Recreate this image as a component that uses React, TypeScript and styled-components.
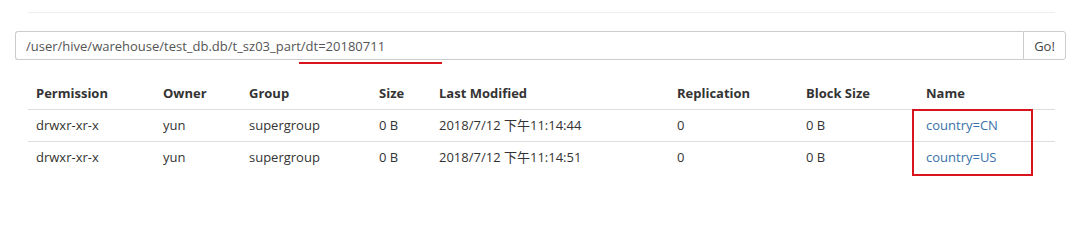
import React from 'react';
import styled, { createGlobalStyle } from 'styled-components';

const GlobalStyle = createGlobalStyle`
  html, body {
    margin: 0;
    padding: 0;
    background: #fff;
  }
  body {
    font-family: "Open Sans", "Noto Sans CJK SC", sans-serif;
    font-size: 13px;
    color: #333;
  }
`;

const Page = styled.div`
  width: 1085px;
  min-height: 205px;
  box-sizing: border-box;
  padding: 12px 19px 0 15px;
`;

const Inset = styled.div`
  margin: 0 11px 0 13px;
`;

const Divider = styled.hr`
  margin: 0;
  border: 0;
  border-top: 1px solid #eee;
`;

const SearchGroup = styled.div`
  position: relative;
  display: flex;
  margin: 18px 0 18px;
  height: 29px;
`;

const PathInput = styled.input`
  flex: 1;
  box-sizing: border-box;
  height: 100%;
  padding: 0 10px;
  border: 1px solid #ccc;
  border-right: 0;
  border-radius: 3px 0 0 3px;
  font-family: inherit;
  font-size: 13px;
  color: #555;
  outline: none;
`;

const GoButton = styled.button`
  box-sizing: border-box;
  width: 43px;
  height: 100%;
  border: 1px solid #ccc;
  border-radius: 0 3px 3px 0;
  background: #fff;
  font-family: inherit;
  font-size: 13px;
  color: #444;
  padding: 0;
`;

const Underline = styled.span`
  position: absolute;
  left: 284px;
  top: 31px;
  width: 143px;
  height: 2px;
  background: #d9141c;
`;

const TableWrap = styled.div`
  position: relative;
`;

const Table = styled.table`
  width: 100%;
  border-collapse: collapse;
  table-layout: fixed;
`;

const HeadCell = styled.th<{ $w: number }>`
  box-sizing: border-box;
  width: ${(p) => p.$w}px;
  text-align: left;
  font-weight: 700;
  padding: 6px 8px;
  line-height: 19px;
  border-bottom: 1px solid #ddd;
`;

const Row = styled.tr<{ $last?: boolean }>`
  border-bottom: ${(p) => (p.$last ? '0' : '1px solid #ddd')};
`;

const Cell = styled.td`
  padding: 6px 8px;
  line-height: 19px;
  white-space: nowrap;
`;

const NameLink = styled.a`
  color: #3a72aa;
  text-decoration: none;
`;

const Highlight = styled.div`
  position: absolute;
  left: 884px;
  top: 31px;
  width: 121px;
  height: 67px;
  box-sizing: border-box;
  border: 2px solid #d9141c;
  pointer-events: none;
`;

const columns: [string, number][] = [
  ['Permission', 127],
  ['Owner', 86],
  ['Group', 130],
  ['Size', 60],
  ['Last Modified', 238],
  ['Replication', 129],
  ['Block Size', 120],
  ['Name', 137],
];

const rows = [
  { modified: '2018/7/12 下午11:14:44', name: 'country=CN' },
  { modified: '2018/7/12 下午11:14:51', name: 'country=US' },
];

const App = () => {
  return (
    <Page>
      <GlobalStyle />
      <Inset>
        <Divider />
      </Inset>
      <SearchGroup>
        <PathInput readOnly value="/user/hive/warehouse/test_db.db/t_sz03_part/dt=20180711" />
        <GoButton>Go!</GoButton>
        <Underline />
      </SearchGroup>
      <Inset>
        <TableWrap>
          <Table>
            <thead>
              <tr>
                {columns.map(([label, w]) => (
                  <HeadCell key={label} $w={w}>
                    {label}
                  </HeadCell>
                ))}
              </tr>
            </thead>
            <tbody>
              {rows.map((r, i) => (
                <Row key={r.name} $last={i === rows.length - 1}>
                  <Cell>drwxr-xr-x</Cell>
                  <Cell>yun</Cell>
                  <Cell>supergroup</Cell>
                  <Cell>0 B</Cell>
                  <Cell>{r.modified}</Cell>
                  <Cell>0</Cell>
                  <Cell>0 B</Cell>
                  <Cell>
                    <NameLink href="#">{r.name}</NameLink>
                  </Cell>
                </Row>
              ))}
            </tbody>
          </Table>
          <Highlight />
        </TableWrap>
      </Inset>
    </Page>
  );
};

export default App;
